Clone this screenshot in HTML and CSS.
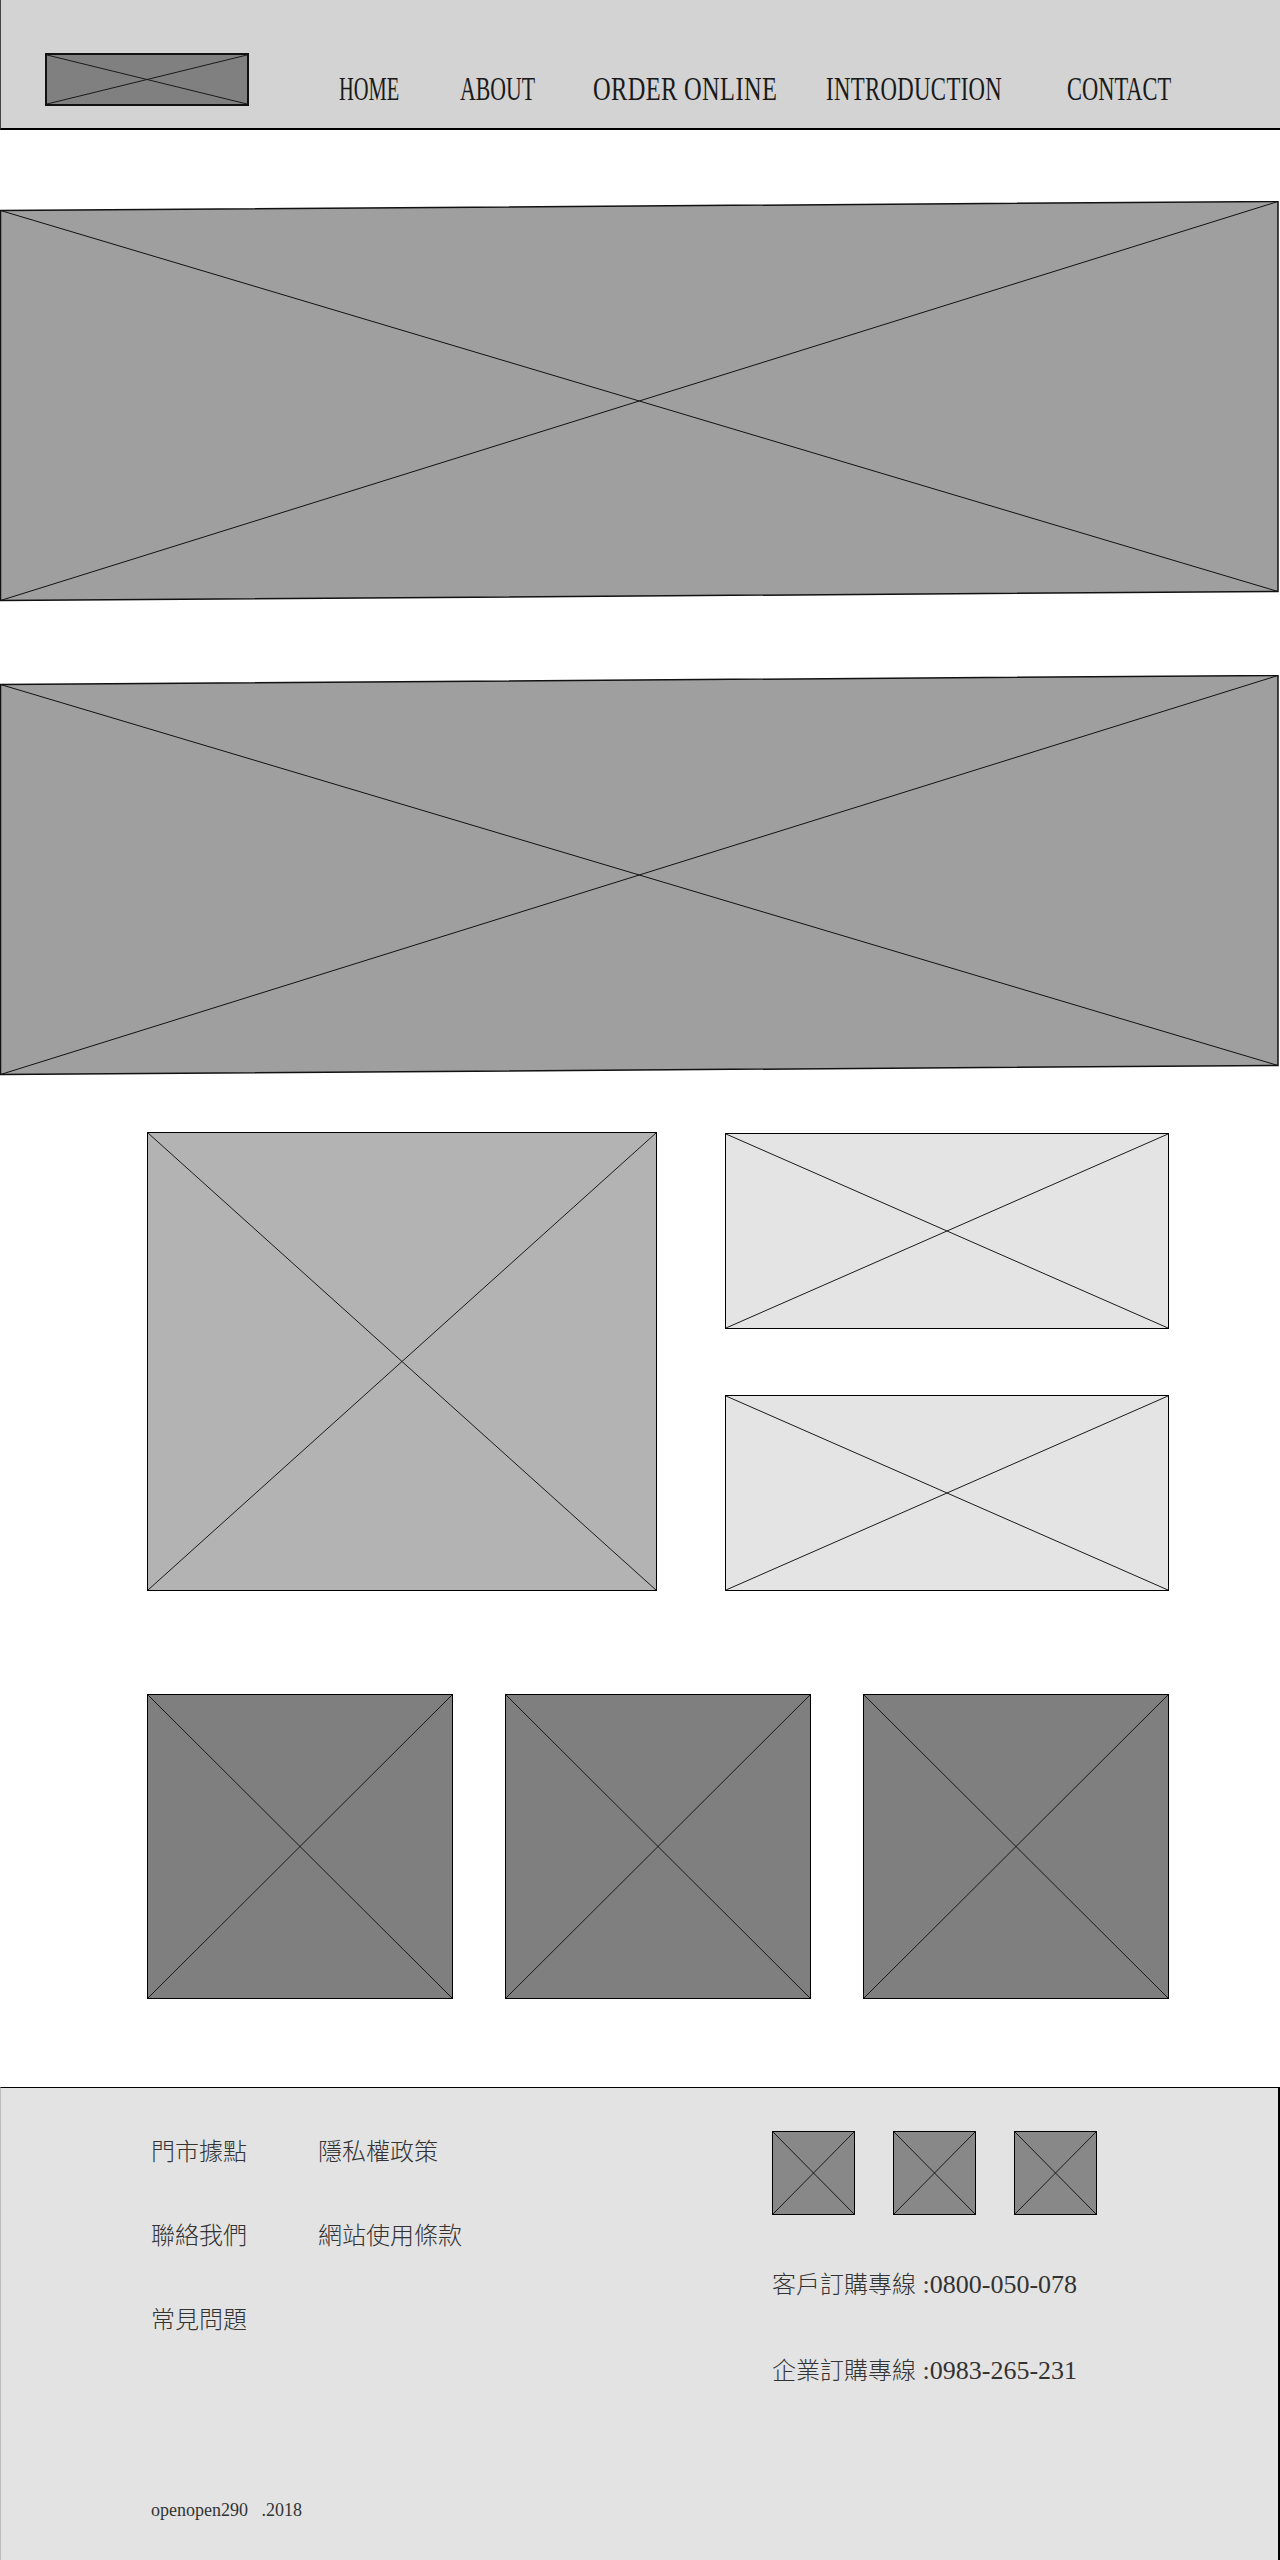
FILE: index.html
```html
<!DOCTYPE html>
<html lang="zh-Hant">
<head>
    <meta charset="UTF-8">
    <meta name="viewport" content="width=device-width, initial-scale=1.0">
    <title>openopen290</title>
    <link rel="stylesheet" href="styles.css">
</head>
<body>
    <header class="site-header">
        <div class="logo ph">
            <svg class="cross" viewBox="0 0 100 100" preserveAspectRatio="none"><line x1="0" y1="0" x2="100" y2="100"/><line x1="0" y1="100" x2="100" y2="0"/></svg>
        </div>
        <nav class="nav">
            <a href="#"><span>HOME</span></a>
            <a href="#"><span>ABOUT</span></a>
            <a href="#"><span>ORDER ONLINE</span></a>
            <a href="#"><span>INTRODUCTION</span></a>
            <a href="#"><span>CONTACT</span></a>
        </nav>
    </header>

    <main>
        <svg class="banner banner-first" viewBox="0 0 1280 401" width="1280" height="401">
            <polygon points="0.5,9.5 1278,0.5 1278,390.5 0.5,399.5"/>
            <line x1="0.5" y1="9.5" x2="1278" y2="390.5"/>
            <line x1="0.5" y1="399.5" x2="1278" y2="0.5"/>
        </svg>

        <svg class="banner banner-second" viewBox="0 0 1280 401" width="1280" height="401">
            <polygon points="0.5,9.5 1278,0.5 1278,390.5 0.5,399.5"/>
            <line x1="0.5" y1="9.5" x2="1278" y2="390.5"/>
            <line x1="0.5" y1="399.5" x2="1278" y2="0.5"/>
        </svg>

        <section class="features">
            <div class="ph feature-main">
                <svg class="cross" viewBox="0 0 100 100" preserveAspectRatio="none"><line x1="0" y1="0" x2="100" y2="100"/><line x1="0" y1="100" x2="100" y2="0"/></svg>
            </div>
            <div class="feature-side">
                <div class="ph feature-small">
                    <svg class="cross" viewBox="0 0 100 100" preserveAspectRatio="none"><line x1="0" y1="0" x2="100" y2="100"/><line x1="0" y1="100" x2="100" y2="0"/></svg>
                </div>
                <div class="ph feature-small">
                    <svg class="cross" viewBox="0 0 100 100" preserveAspectRatio="none"><line x1="0" y1="0" x2="100" y2="100"/><line x1="0" y1="100" x2="100" y2="0"/></svg>
                </div>
            </div>
        </section>

        <section class="products">
            <div class="ph product">
                <svg class="cross" viewBox="0 0 100 100" preserveAspectRatio="none"><line x1="0" y1="0" x2="100" y2="100"/><line x1="0" y1="100" x2="100" y2="0"/></svg>
            </div>
            <div class="ph product">
                <svg class="cross" viewBox="0 0 100 100" preserveAspectRatio="none"><line x1="0" y1="0" x2="100" y2="100"/><line x1="0" y1="100" x2="100" y2="0"/></svg>
            </div>
            <div class="ph product">
                <svg class="cross" viewBox="0 0 100 100" preserveAspectRatio="none"><line x1="0" y1="0" x2="100" y2="100"/><line x1="0" y1="100" x2="100" y2="0"/></svg>
            </div>
        </section>
    </main>

    <footer class="site-footer">
        <div class="footer-top">
            <ul class="footer-links">
                <li><a href="#">門市據點</a></li>
                <li><a href="#">隱私權政策</a></li>
                <li><a href="#">聯絡我們</a></li>
                <li><a href="#">網站使用條款</a></li>
                <li><a href="#">常見問題</a></li>
            </ul>
            <div class="footer-contact">
                <div class="social">
                    <a href="#" class="ph social-icon"><svg class="cross" viewBox="0 0 100 100" preserveAspectRatio="none"><line x1="0" y1="0" x2="100" y2="100"/><line x1="0" y1="100" x2="100" y2="0"/></svg></a>
                    <a href="#" class="ph social-icon"><svg class="cross" viewBox="0 0 100 100" preserveAspectRatio="none"><line x1="0" y1="0" x2="100" y2="100"/><line x1="0" y1="100" x2="100" y2="0"/></svg></a>
                    <a href="#" class="ph social-icon"><svg class="cross" viewBox="0 0 100 100" preserveAspectRatio="none"><line x1="0" y1="0" x2="100" y2="100"/><line x1="0" y1="100" x2="100" y2="0"/></svg></a>
                </div>
                <p class="phone"><span class="label">客戶訂購專線</span> :0800-050-078</p>
                <p class="phone"><span class="label">企業訂購專線</span> :0983-265-231</p>
            </div>
        </div>
        <p class="copyright">openopen290 &nbsp; .2018</p>
    </footer>
</body>
</html>
```

FILE: styles.css
```css
body {
    margin: 0;
    padding: 0;
    background: #fff;
    color: #222;
    font-family: "Liberation Serif", "Noto Sans CJK TC", serif;
}
a {
    color: inherit;
    text-decoration: none;
}

/* placeholder boxes with a cross */
.ph {
    display: block;
    box-sizing: border-box;
    border: 1px solid #000;
}
.cross {
    display: block;
    width: 100%;
    height: 100%;
}
.cross line {
    stroke: #1a1a1a;
    stroke-width: 1;
    vector-effect: non-scaling-stroke;
}

/* header */
.site-header {
    display: flex;
    box-sizing: border-box;
    height: 130px;
    padding: 53px 0 0 44px;
    background: #d3d3d3;
    border-left: 1px solid #444;
    border-bottom: 2px solid #000;
}
.logo {
    width: 204px;
    height: 53px;
    border: 2px solid #111;
    background: #808080;
}
.nav {
    display: grid;
    grid-template-columns: 121px 133px 233px 241px auto;
    margin-left: 90px;
    padding-top: 20px;
    font-size: 33px;
    line-height: 33px;
    color: #1a1a1a;
}
.nav span {
    display: inline-block;
    white-space: nowrap;
    transform: scaleX(0.68);
    transform-origin: left center;
}
.nav a:nth-child(1) span { transform: scaleX(0.62); }
.nav a:nth-child(2) span { transform: scaleX(0.66); }
.nav a:nth-child(3) span { transform: scaleX(0.74); letter-spacing: 0.5px; }
.nav a:nth-child(4) span { transform: scaleX(0.69); letter-spacing: 0.5px; }

/* banners */
.banner {
    display: block;
}
.banner-first {
    margin-top: 71px;
}
.banner-second {
    margin-top: 73px;
}
.banner polygon {
    fill: #9f9f9f;
    stroke: #111;
    stroke-width: 1.5;
}
.banner line {
    stroke: #111;
    stroke-width: 1;
}

/* feature row */
.features {
    display: flex;
    justify-content: space-between;
    width: 1022px;
    margin: 56px 0 0 147px;
}
.feature-main {
    width: 510px;
    height: 459px;
    background: #b3b3b3;
}
.feature-side {
    display: flex;
    flex-direction: column;
    gap: 66px;
    padding-top: 1px;
}
.feature-small {
    width: 444px;
    height: 196px;
    background: #e4e4e4;
}

/* product row */
.products {
    display: grid;
    grid-template-columns: repeat(3, 306px);
    gap: 52px;
    width: 1022px;
    margin: 103px 0 0 147px;
}
.product {
    height: 305px;
    background: #7f7f7f;
}

/* footer */
.site-footer {
    box-sizing: border-box;
    height: 473px;
    margin-top: 88px;
    padding: 43px 0 0 150px;
    background: #e3e3e3;
    border-top: 1px solid #000;
    border-right: 2px solid #000;
    border-left: 1px solid #bbb;
    color: #333;
}
.footer-top {
    display: flex;
}
.footer-links {
    display: grid;
    grid-template-columns: 167px 454px;
    grid-auto-rows: 24px;
    row-gap: 60px;
    align-content: start;
    margin: 7px 0 0;
    padding: 0;
    list-style: none;
    font-family: "Noto Sans CJK TC", sans-serif;
    font-size: 24px;
    font-weight: 300;
    line-height: 24px;
}
.social {
    display: flex;
    gap: 38px;
}
.social-icon {
    width: 83px;
    height: 84px;
    background: #888;
}
.phone {
    margin: 56px 0 0;
    font-size: 26px;
    line-height: 24px;
    white-space: nowrap;
}
.phone + .phone {
    margin-top: 60px;
}
.phone .label {
    font-family: "Noto Sans CJK TC", sans-serif;
    font-size: 24px;
    font-weight: 300;
}
.copyright {
    margin: 118px 0 0;
    font-size: 18px;
    line-height: 18px;
}
```
